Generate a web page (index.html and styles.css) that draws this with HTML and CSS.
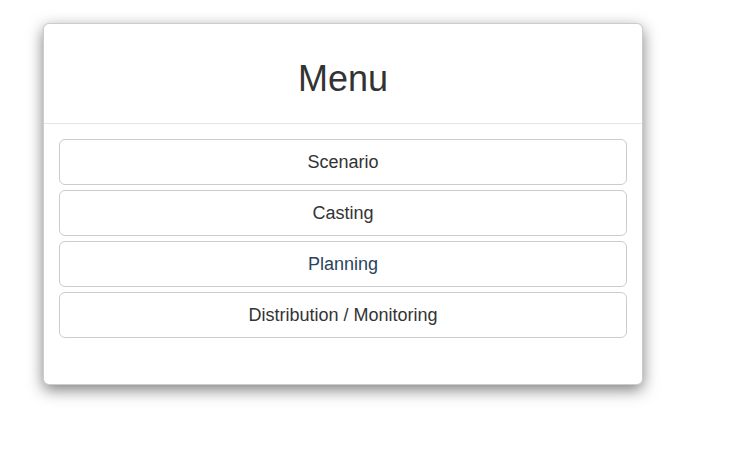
FILE: index.html
```html
<!DOCTYPE html>
<html>
<head>
<meta charset="utf-8">
<link rel="stylesheet" href="styles.css">
</head>
<body>
<div class="page">
  <div class="modal">
    <div class="modal-header">
      <h1 class="title">Menu</h1>
    </div>
    <div class="modal-body">
      <a class="btn">Scenario</a>
      <a class="btn">Casting</a>
      <a class="btn btn-focus">Planning</a>
      <a class="btn">Distribution / Monitoring</a>
    </div>
  </div>
</div>
</body>
</html>
```

FILE: styles.css
```css
* { box-sizing: border-box; }
html, body { margin: 0; background: #fff; }
body {
  font-family: "Liberation Sans", Arial, Helvetica, sans-serif;
  font-size: 14px;
  color: #333;
  min-height: 466px;
}
.page {
  padding: 23px 0 60px 43px;
}
.modal {
  width: 600px;
  background: #fff;
  border: 1px solid rgba(0,0,0,.2);
  border-radius: 6px;
  box-shadow: 0 5px 15px rgba(0,0,0,.5);
}
.modal-header {
  padding: 15px;
  border-bottom: 1px solid #e5e5e5;
}
.title {
  margin: 20px 0 9px;
  font-size: 36px;
  line-height: 1.1;
  font-weight: 500;
  text-align: center;
  color: #333;
}
.modal-body {
  padding: 15px 15px 46px;
  display: flex;
  flex-direction: column;
  gap: 5px;
}
.btn {
  display: block;
  padding: 10px 16px;
  font-size: 18px;
  line-height: 24px;
  text-align: center;
  color: #333;
  background: #fff;
  border: 1px solid #ccc;
  border-radius: 6px;
}
.btn-focus {
  color: #2a4360;
}
```
